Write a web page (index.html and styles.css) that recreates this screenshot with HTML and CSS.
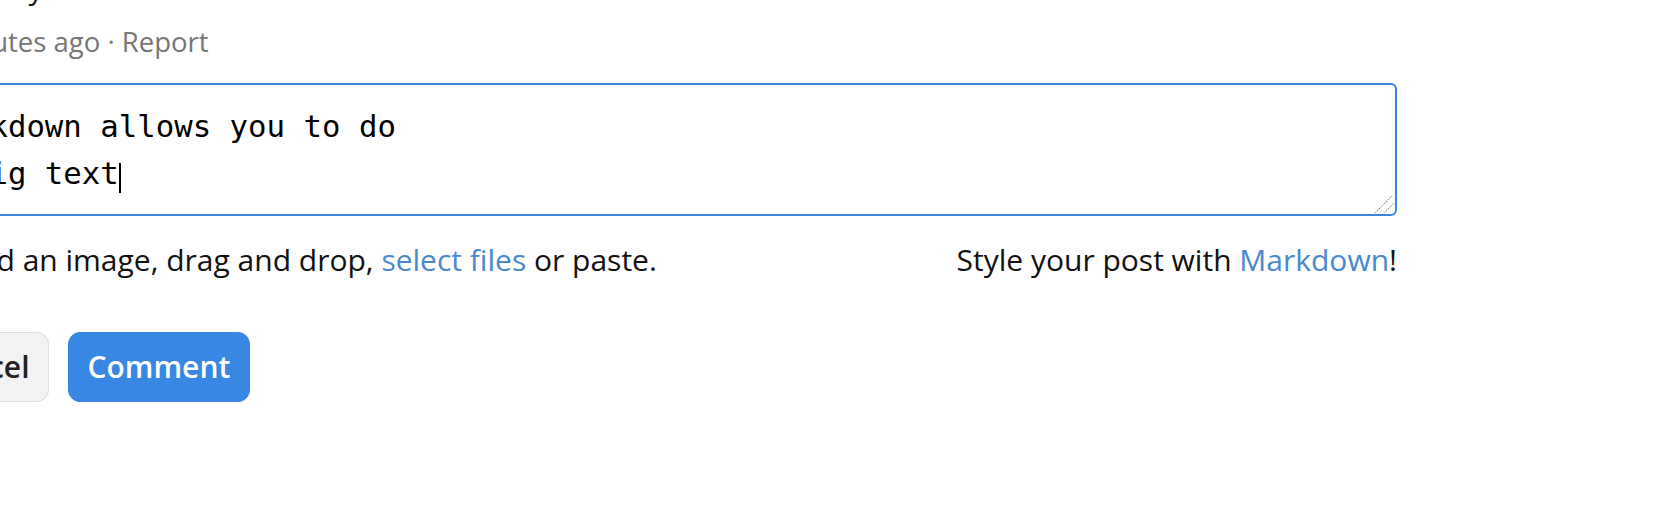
FILE: index.html
```html
<!DOCTYPE html>
<html lang="en">
<head>
<meta charset="utf-8">
<title>Comment</title>
<link rel="stylesheet" href="styles.css">
</head>
<body>
<div class="page">
  <p class="comment-text">A thank you to all</p>
  <div class="meta">5 minutes ago · <a class="meta-link" href="#">Report</a></div>
  <form class="reply">
    <div class="editor" role="textbox" aria-multiline="true">
      <div class="editor-line">Markdown allows you to do</div>
      <div class="editor-line">**big text<span class="caret"></span></div>
      <svg class="grip" width="20" height="20" viewBox="0 0 20 20" aria-hidden="true">
        <line x1="0.3" y1="18.7" x2="17.3" y2="1.5"/>
        <line x1="9.3" y1="18.7" x2="19" y2="9"/>
      </svg>
    </div>
    <div class="help">
      <span>Upload an image, drag and drop, <a href="#" class="link">select files</a> or paste.</span>
      <span>Style your post with <a href="#" class="link">Markdown</a>!</span>
    </div>
    <div class="actions">
      <button type="button" class="btn btn-cancel">Cancel</button>
      <button type="button" class="btn btn-primary">Comment</button>
    </div>
  </form>
</div>
</body>
</html>
```

FILE: styles.css
```css
html, body {
  margin: 0;
  padding: 0;
  background: #ffffff;
  overflow: hidden;
}

body {
  font-family: "Open Sans", "Liberation Sans", sans-serif;
  color: #111111;
}

.page {
  width: 1483px;
  margin: -35px 0 0 -86px;
}

.comment-text {
  margin: 0;
  font-size: 30px;
  line-height: 45px;
  color: #1a1a1a;
}

.meta {
  margin-top: 12.5px;
  padding-left: 5px;
  font-size: 27.5px;
  line-height: 38px;
  color: #767676;
}

.meta-link {
  color: #767676;
  text-decoration: none;
}

.reply {
  margin: 22.5px 0 0;
}

.editor {
  position: relative;
  border: 2px solid #3a86e0;
  border-radius: 6px;
  padding: 18px 18px 17px;
  font-family: "DejaVu Sans Mono", "Liberation Mono", monospace;
  font-size: 30.7px;
  line-height: 47px;
  color: #000000;
}

.editor-line {
  white-space: pre;
}

.caret {
  display: inline-block;
  width: 2px;
  height: 30px;
  background: #000000;
  vertical-align: -9px;
}

.grip {
  position: absolute;
  right: 0;
  bottom: 0;
}

.grip line {
  stroke: #6f6f6f;
  stroke-width: 1;
  stroke-dasharray: 1.5 1;
}

.help {
  display: flex;
  justify-content: space-between;
  margin-top: 23.4px;
  font-size: 30px;
  line-height: 42px;
  color: #111111;
}

.link {
  color: #4a88cf;
  text-decoration: none;
}

.actions {
  display: flex;
  gap: 19px;
  margin-top: 50.6px;
}

.btn {
  font-family: "Open Sans", "Liberation Sans", sans-serif;
  font-size: 30px;
  font-weight: 600;
  line-height: 42px;
  padding: 13px 18.5px;
  border-radius: 12px;
  cursor: pointer;
}

.btn-cancel {
  background: #f2f2f2;
  border: 1px solid #dddddd;
  color: #222222;
}

.btn-primary {
  background: #3787e3;
  border: 1px solid #3787e3;
  color: #ffffff;
}
```
